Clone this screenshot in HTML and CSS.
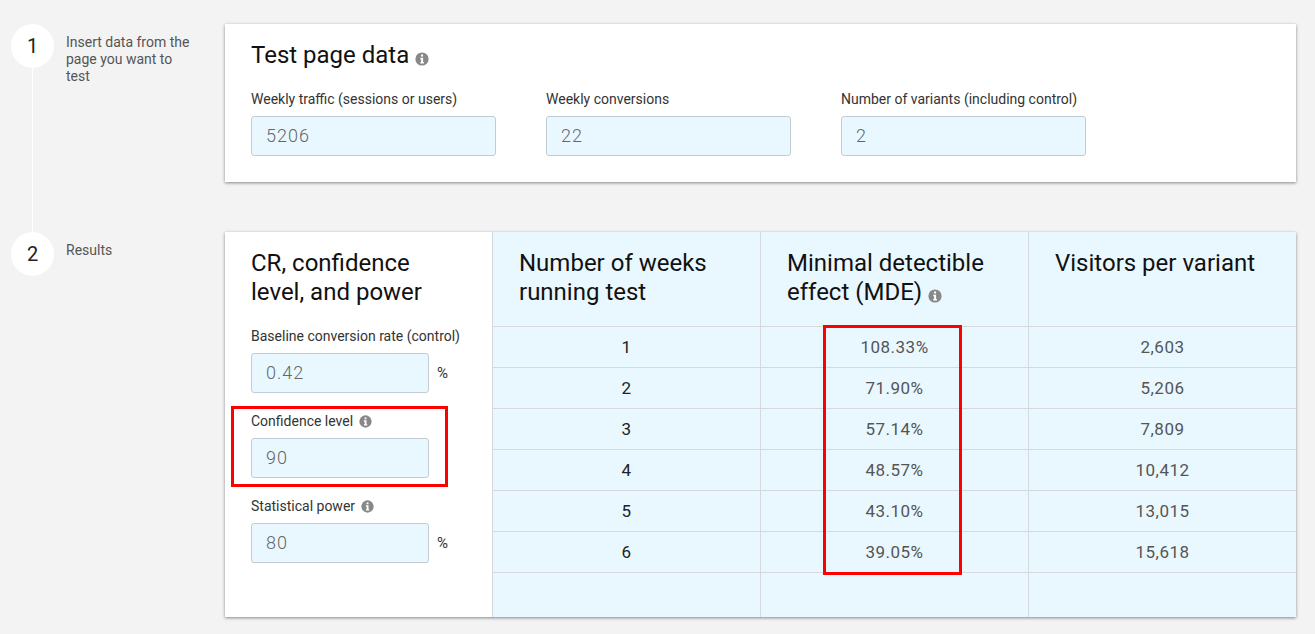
FILE: index.html
```html
<!DOCTYPE html>
<html lang="en">
<head>
<meta charset="utf-8">
<title>Test duration calculator</title>
<link rel="stylesheet" href="styles.css">
</head>
<body>
<svg class="sprite" width="0" height="0" aria-hidden="true">
  <symbol id="info" viewBox="0 0 14 14">
    <circle cx="7" cy="7" r="6.6" fill="#888"/>
    <path fill="#fff" d="M6 2.6h2.1v1.9H6zM5.3 5.7h2.8v4.2h.8v1.5H5.3V9.9h.8V7.2h-.8z"/>
  </symbol>
</svg>
<main class="page">
  <section class="step">
    <div class="marker">
      <div class="circle">1</div>
      <div class="line"></div>
    </div>
    <p class="step-text">Insert data from the page you want to test</p>
    <div class="card card-top">
      <h2 class="title">Test page data <svg class="info info-title"><use href="#info"/></svg></h2>
      <div class="top-fields">
        <div class="top-field">
          <label class="label">Weekly traffic (sessions or users)</label>
          <input class="input input-wide" value="5206">
        </div>
        <div class="top-field">
          <label class="label">Weekly conversions</label>
          <input class="input input-wide" value="22">
        </div>
        <div class="top-field">
          <label class="label">Number of variants (including control)</label>
          <input class="input input-wide" value="2">
        </div>
      </div>
    </div>
  </section>
  <section class="step">
    <div class="marker">
      <div class="circle">2</div>
    </div>
    <p class="step-text">Results</p>
    <div class="card card-results">
      <div class="side">
        <h2 class="title side-title">CR, confidence level, and power</h2>
        <div class="field">
          <label class="label">Baseline conversion rate (control)</label>
          <div class="input-row"><input class="input" value="0.42"><span class="unit">%</span></div>
        </div>
        <div class="field">
          <label class="label">Confidence level <svg class="info"><use href="#info"/></svg></label>
          <div class="input-row"><input class="input" value="90"></div>
        </div>
        <div class="field">
          <label class="label">Statistical power <svg class="info"><use href="#info"/></svg></label>
          <div class="input-row"><input class="input" value="80"><span class="unit">%</span></div>
        </div>
      </div>
      <div class="table">
        <div class="column">
          <div class="head">Number of weeks running test</div>
          <div class="cell cell-dark">1</div><div class="cell cell-dark">2</div><div class="cell cell-dark">3</div>
          <div class="cell cell-dark">4</div><div class="cell cell-dark">5</div><div class="cell cell-dark">6</div>
        </div>
        <div class="column">
          <div class="head">Minimal detectible effect (MDE) <svg class="info info-head"><use href="#info"/></svg></div>
          <div class="cell">108.33%</div><div class="cell">71.90%</div><div class="cell">57.14%</div>
          <div class="cell">48.57%</div><div class="cell">43.10%</div><div class="cell">39.05%</div>
        </div>
        <div class="column">
          <div class="head">Visitors per variant</div>
          <div class="cell">2,603</div><div class="cell">5,206</div><div class="cell">7,809</div>
          <div class="cell">10,412</div><div class="cell">13,015</div><div class="cell">15,618</div>
        </div>
      </div>
    </div>
  </section>
</main>
<div class="highlight highlight-confidence"></div>
<div class="highlight highlight-mde"></div>
</body>
</html>
```

FILE: styles.css
```css
* { box-sizing: border-box; }

html, body { margin: 0; height: 100%; }

body {
  position: relative;
  background: #f3f3f3;
  font-family: Roboto, "Liberation Sans", sans-serif;
  color: #111;
  overflow: hidden;
}

.sprite { position: absolute; }

.page { padding: 24px 19px 0 11px; }

.step { display: flex; align-items: stretch; }

.marker {
  flex: 0 0 43px;
  display: flex;
  flex-direction: column;
  align-items: center;
}

.circle {
  flex: 0 0 44px;
  width: 43px;
  border-radius: 50%;
  background: #fff;
  display: flex;
  align-items: center;
  justify-content: center;
  font-size: 20px;
  color: #222;
}

.line { flex: 1; width: 1px; background: #fff; }

.step-text {
  flex: 0 0 171px;
  margin: 0;
  padding: 10px 35px 0 12px;
  font-size: 14px;
  line-height: 17px;
  color: #555;
}

.card {
  flex: 1;
  background: #fff;
  box-shadow: 0 1px 3px rgba(0, 0, 0, .45);
}

.card-top { padding: 17px 26px 26px; margin-bottom: 50px; }

.title {
  margin: 0 0 21px;
  font-size: 24px;
  line-height: 29px;
  font-weight: 400;
  color: #111;
}

.info {
  width: 13px;
  height: 13px;
  vertical-align: -2px;
  margin-left: 2px;
}

.info-title { width: 14px; height: 14px; vertical-align: -3px; margin-left: 0; }

.info-head { width: 14px; height: 14px; vertical-align: -3px; margin-left: 0; }

.top-fields { display: flex; gap: 50px; }

.top-field { width: 245px; }

.label {
  display: block;
  margin-bottom: 8px;
  font-size: 14px;
  line-height: 17px;
  color: #333;
  white-space: nowrap;
}

.input {
  display: block;
  width: 178px;
  height: 40px;
  padding: 0 14px 2px;
  background: #e9f8ff;
  border: 1px solid #c2ccd4;
  border-radius: 3px;
  font-family: inherit;
  font-size: 18px;
  font-weight: 300;
  letter-spacing: 1px;
  color: #666;
}

.input-wide { width: 245px; }

.input-row { display: flex; align-items: center; gap: 8px; }

.unit { font-size: 15px; color: #333; }

.card-results { display: flex; height: 385px; }

.side { flex: 0 0 267px; padding: 17px 26px 0; }

.side-title { width: 200px; }

.field { margin-bottom: 20px; }

.table { flex: 1; display: flex; background: #e9f8ff; }

.column { flex: 1; border-left: 1px solid #d5d9dd; }

.head {
  height: 95px;
  padding: 17px 26px 0;
  font-size: 24px;
  line-height: 29px;
  color: #111;
  border-bottom: 1px solid #d5d9dd;
}

.cell {
  height: 41px;
  display: flex;
  align-items: center;
  justify-content: center;
  font-size: 17px;
  letter-spacing: .5px;
  color: #555;
  border-bottom: 1px solid #d5d9dd;
}

.cell-dark { color: #222; }

.highlight {
  position: absolute;
  border: 3px solid #f00;
  pointer-events: none;
}

.highlight-confidence { left: 231px; top: 406px; width: 217px; height: 81px; }

.highlight-mde { left: 823px; top: 325px; width: 139px; height: 250px; }
```
